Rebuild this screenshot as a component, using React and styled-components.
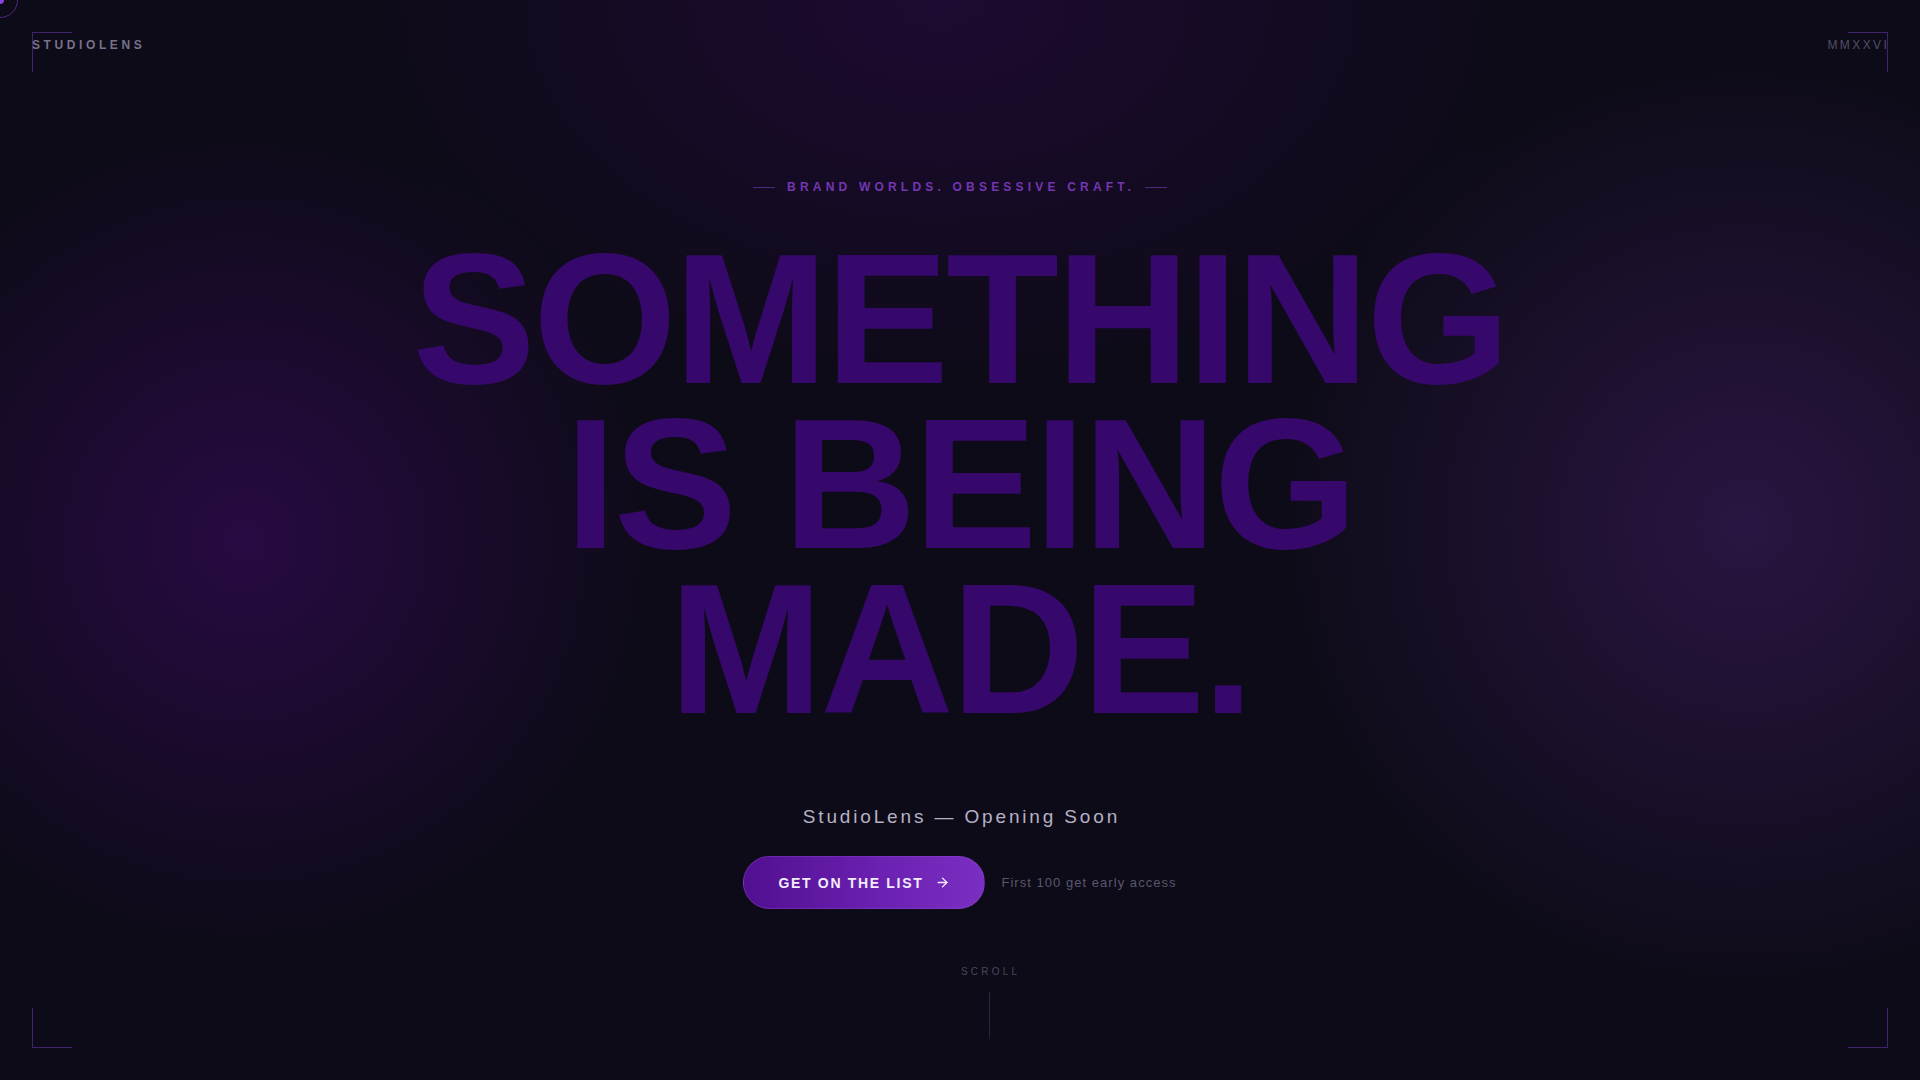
import React from 'react';
import styled, { createGlobalStyle } from 'styled-components';
import { ArrowRight } from 'lucide-react';

const GlobalStyle = createGlobalStyle`
  html, body {
    margin: 0;
    padding: 0;
    background: #0d0b17;
  }
  * {
    box-sizing: border-box;
  }
`;

const App = () => {
  return (
    <>
      <GlobalStyle />
      <Page>
        <Cursor>
          <CursorDot />
        </Cursor>

        <Corner $top $left />
        <Corner $top $right />
        <Corner $bottom $left />
        <Corner $bottom $right />

        <Header>
          <Brand>STUDIOLENS</Brand>
          <Year>MMXXVI</Year>
        </Header>

        <Main>
          <Tagline>
            <TagRule />
            <TagText>BRAND WORLDS. OBSESSIVE CRAFT.</TagText>
            <TagRule />
          </Tagline>

          <Headline>
            SOMETHING
            <br />
            IS BEING
            <br />
            MADE.
          </Headline>

          <Subtitle>StudioLens — Opening Soon</Subtitle>

          <CtaRow>
            <CtaButton type="button">
              GET ON THE LIST
              <ArrowRight size={15} strokeWidth={2.2} />
            </CtaButton>
            <CtaNote>First 100 get early access</CtaNote>
          </CtaRow>

          <Scroll>
            <ScrollLabel>SCROLL</ScrollLabel>
            <ScrollLine />
          </Scroll>
        </Main>
      </Page>
    </>
  );
};

export default App;

const Page = styled.div`
  position: relative;
  width: 100%;
  height: 100vh;
  overflow: hidden;
  padding: 32px;
  display: flex;
  flex-direction: column;
  font-family: "Liberation Sans", Arial, sans-serif;
  background:
    radial-gradient(ellipse 600px 400px at 940px 0px, rgba(36, 10, 60, 0.7), rgba(36, 10, 60, 0) 100%),
    radial-gradient(circle 420px at 245px 540px, rgba(44, 10, 74, 0.85), rgba(44, 10, 74, 0) 100%),
    radial-gradient(circle 480px at 1745px 525px, rgba(44, 22, 70, 0.9), rgba(44, 22, 70, 0) 100%),
    #0d0b17;
`;

const Cursor = styled.div`
  position: absolute;
  top: -18px;
  left: -18px;
  width: 36px;
  height: 36px;
  border-radius: 50%;
  border: 1.5px solid rgba(124, 58, 200, 0.6);
  display: flex;
  align-items: center;
  justify-content: center;
  z-index: 10;
`;

const CursorDot = styled.div`
  width: 8px;
  height: 8px;
  border-radius: 50%;
  background: #8b44e6;
`;

const Corner = styled.div`
  position: absolute;
  width: 40px;
  height: 40px;
  border-color: rgba(98, 52, 170, 0.6);
  border-style: solid;
  border-width: 0;
  ${(p) => (p.$top ? 'top: 32px; border-top-width: 1px;' : 'bottom: 32px; border-bottom-width: 1px;')}
  ${(p) => (p.$left ? 'left: 32px; border-left-width: 1px;' : 'right: 32px; border-right-width: 1px;')}
`;

const Header = styled.header`
  display: flex;
  justify-content: space-between;
  align-items: center;
  height: 26px;
  line-height: 26px;
  font-size: 12px;
`;

const Brand = styled.div`
  font-weight: 700;
  letter-spacing: 0.3em;
  color: #76728a;
  margin-right: -0.3em;
`;

const Year = styled.div`
  letter-spacing: 0.2em;
  color: #524e66;
  margin-right: -0.1em;
`;

const Main = styled.main`
  display: flex;
  flex-direction: column;
  align-items: center;
  margin-top: 122px;
`;

const Tagline = styled.div`
  display: flex;
  align-items: center;
  gap: 12px;
  height: 14px;
`;

const TagRule = styled.span`
  width: 22px;
  height: 1px;
  background: #4a2a7c;
`;

const TagText = styled.span`
  font-size: 12px;
  font-weight: 700;
  letter-spacing: 0.35em;
  margin-right: -0.35em;
  padding-right: 2px;
  color: #7436b2;
`;

const Headline = styled.h1`
  margin: 43px 0 0;
  font-size: 185px;
  line-height: 165px;
  font-weight: 700;
  letter-spacing: -0.015em;
  text-align: center;
  color: #37086c;
`;

const Subtitle = styled.p`
  margin: 74px 0 0;
  font-size: 19px;
  line-height: 22px;
  letter-spacing: 0.15em;
  margin-right: -0.15em;
  color: #b6b1c6;
`;

const CtaRow = styled.div`
  display: flex;
  align-items: center;
  gap: 16px;
  margin-top: 28px;
`;

const CtaButton = styled.button`
  display: flex;
  align-items: center;
  gap: 12px;
  height: 53px;
  padding: 0 34px;
  border: 1px solid rgba(150, 90, 220, 0.3);
  border-radius: 999px;
  background: linear-gradient(90deg, #520f90 0%, #6a20b0 55%, #7b2fc2 100%);
  color: #f3ecff;
  font-family: "Liberation Sans", Arial, sans-serif;
  font-size: 14px;
  font-weight: 700;
  letter-spacing: 0.12em;
  cursor: pointer;
`;

const CtaNote = styled.span`
  font-size: 13px;
  letter-spacing: 0.08em;
  color: #5a566e;
`;

const Scroll = styled.div`
  display: flex;
  flex-direction: column;
  align-items: center;
  gap: 14px;
  margin-top: 57px;
  margin-left: 58px;
`;

const ScrollLabel = styled.span`
  font-size: 10px;
  line-height: 12px;
  letter-spacing: 0.32em;
  margin-right: -0.32em;
  color: #4a4660;
`;

const ScrollLine = styled.span`
  width: 1px;
  height: 47px;
  background: linear-gradient(180deg, #2e2944 0%, #26223a 100%);
`;
